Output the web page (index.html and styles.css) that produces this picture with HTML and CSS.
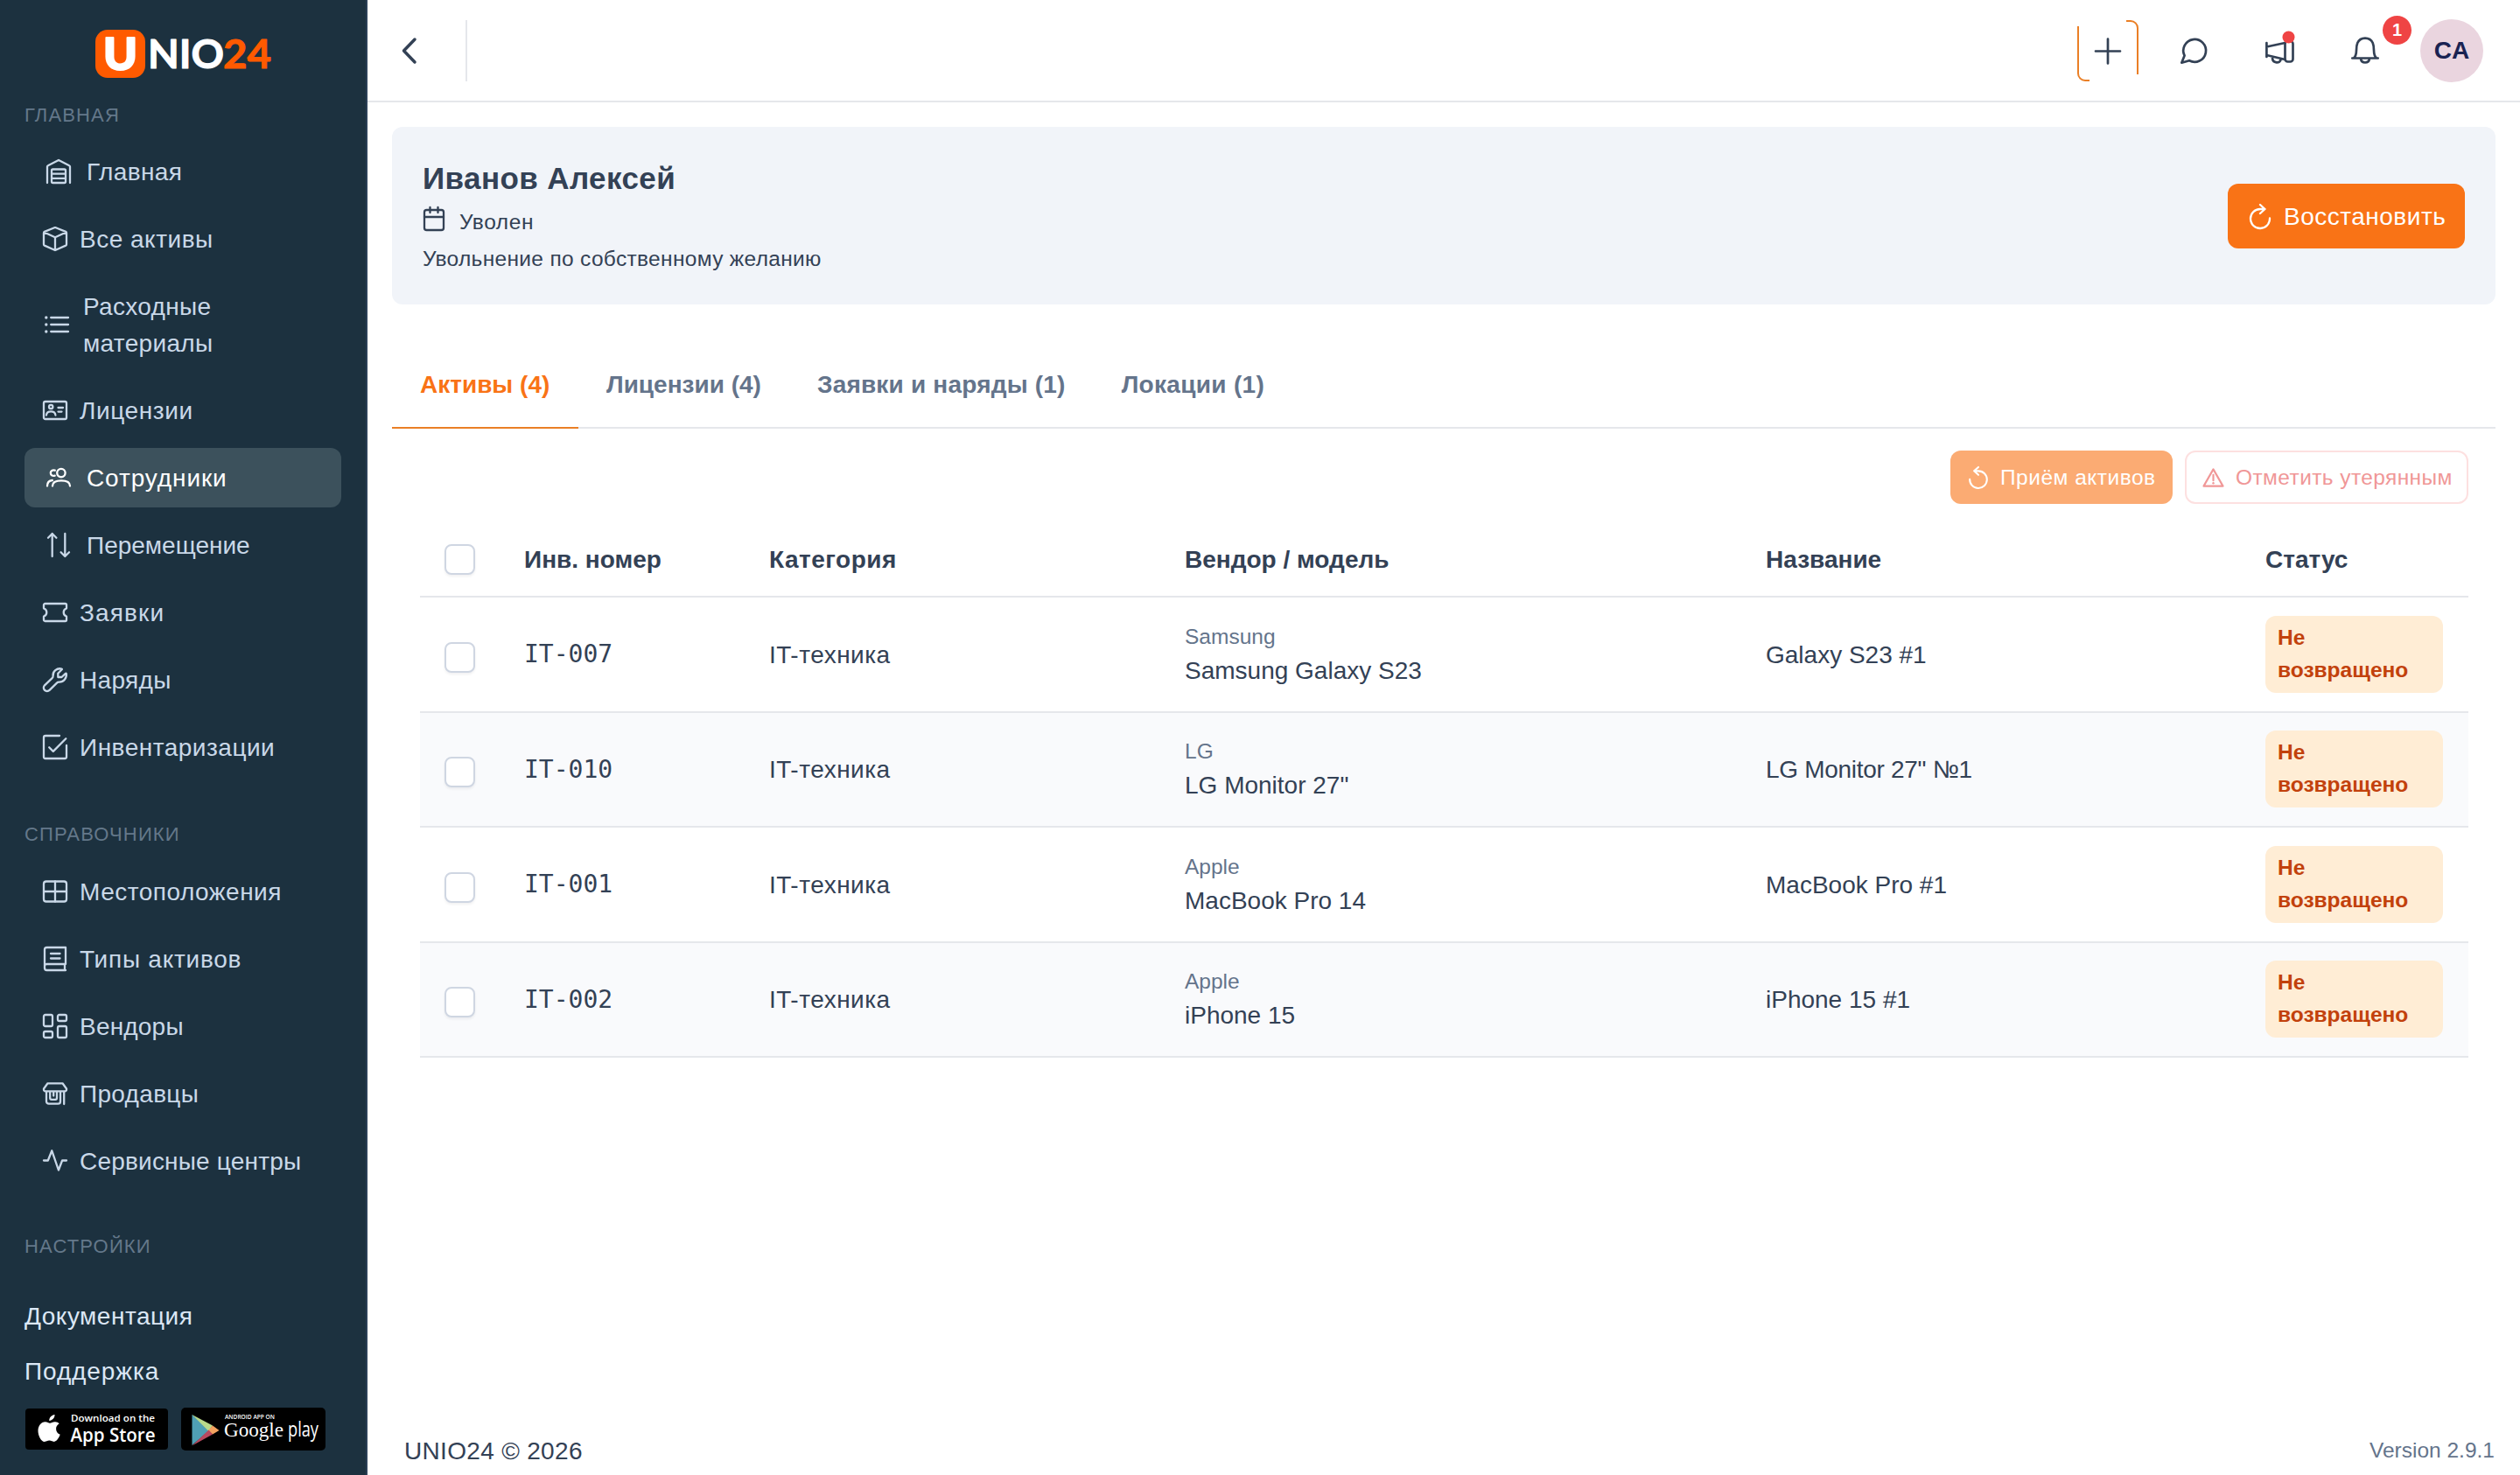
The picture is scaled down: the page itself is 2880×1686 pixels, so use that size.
FILE: index.html
```html
<!DOCTYPE html>
<html lang="ru">
<head>
<meta charset="utf-8">
<title>UNIO24</title>
<link rel="stylesheet" href="styles.css">
</head>
<body>
<svg class="sprite" aria-hidden="true">
  <symbol id="i-home" viewBox="0 0 28 28"><path d="M1 27V8.6a1.5 1.5 0 0 1 .9-1.4L14 1l12.1 6.2a1.5 1.5 0 0 1 .9 1.4V27M6 25.500v-12.500a1.500 1.500 0 0 1 1.500-1.500h13a1.500 1.500 0 0 1 1.500 1.500v12.500a1.500 1.500 0 0 1-1.500 1.500h-13a1.500 1.500 0 0 1-1.500-1.500M6 16.600h16M6 21.800h16"/></symbol>
  <symbol id="i-box" viewBox="0 0 28 28"><path d="M13.200 1.200 1.800 5.900Q1 6.300 1 7.200v13.100q0 .9.800 1.300L13.300 26.800q.7.300 1.400 0L26.200 21.600q.8-.4.800-1.300V7.200q0-.9-.8-1.300L14.800 1.200q-.8-.3-1.600 0zM1.500 6.500 14 12.200 26.500 6.500M14 12.200V27"/></symbol>
  <symbol id="i-list" viewBox="0 0 28 28"><path d="M7.200 6H27M7.200 14H27M7.200 22H27"/><circle class="fill" cx="1.800" cy="6" r="1.700"/><circle class="fill" cx="1.800" cy="14" r="1.700"/><circle class="fill" cx="1.800" cy="22" r="1.700"/></symbol>
  <symbol id="i-card" viewBox="0 0 28 28"><rect x="1" y="4" width="26" height="20" rx="1.800"/><circle cx="9.200" cy="10" r="2.200"/><path d="M4 19.500c.2-3 2.400-4.200 5.200-4.200s5 1.200 5.200 4.200M17.500 11H23M17.500 15.600h4"/></symbol>
  <symbol id="i-users" viewBox="0 0 28 28"><circle cx="16.900" cy="8.600" r="4.700"/><path d="M7 23.500c0-4.400 4.400-6.200 10-6.200s10 1.800 10 6.200M9.800 5.700C7 4.800 4.800 6.300 4.800 8.600s2.200 4 4.900 3M1 23.500c0-3.900 2-6.100 5.800-6.500"/></symbol>
  <symbol id="i-sort" viewBox="0 0 28 28"><path d="M6.700 27V1M2 5.700 6.700 1l4.700 4.700M21.300 1v26M16.600 22.300l4.700 4.700 4.700-4.700"/></symbol>
  <symbol id="i-ticket" viewBox="0 0 28 28"><path d="M2.500 4h23A1.500 1.500 0 0 1 27 5.500v3.800a5 5 0 0 0 0 9.400v3.800a1.500 1.500 0 0 1-1.500 1.500h-23A1.500 1.500 0 0 1 1 22.500v-3.800a5 5 0 0 0 0-9.400V5.500A1.500 1.500 0 0 1 2.500 4z"/></symbol>
  <symbol id="i-wrench" viewBox="0 0 28 28"><path d="M21.500 1.500C16 .2 11 4.300 11.600 9.600q.1 1.600-1 2.500L2 20.300a3.900 3.900 0 0 0 5.600 5.600l8.400-8.300q1-1 2.500-.9c5.300.3 9-4.700 8.300-9.700q-.2-.8-.9-.2L21.500 11h-4.200V6.700l4.400-4.400q.5-.6-.2-.8z"/></symbol>
  <symbol id="i-check" viewBox="0 0 28 28"><path d="M19 1H3a2 2 0 0 0-2 2v22a2 2 0 0 0 2 2h22a2 2 0 0 0 2-2V12M7.200 14.200l4.600 4.700L26.300 4.300"/></symbol>
  <symbol id="i-table" viewBox="0 0 28 28"><rect x="1" y="2.500" width="26" height="23" rx="2.800"/><path d="M14 2.500v23M1 14h26"/></symbol>
  <symbol id="i-book" viewBox="0 0 28 28"><path d="M26 20V1H4.500A2.500 2.500 0 0 0 2 3.500v21A2.500 2.500 0 0 0 4.500 27H26M25 20v7M26 20H4.500A2.300 2.300 0 0 0 2 22.200M9 8h10.500M9 13.500h10.500"/></symbol>
  <symbol id="i-objects" viewBox="0 0 28 28"><rect x="1" y="1" width="10" height="13" rx="1.800"/><rect x="17" y="1" width="10" height="7" rx="1.800"/><rect x="1" y="20" width="10" height="7" rx="1.800"/><rect x="17" y="14" width="10" height="13" rx="1.800"/></symbol>
  <symbol id="i-shop" viewBox="0 0 28 28"><path d="M5.500 2.300h17L27 8.500v1a1.800 1.800 0 0 1-1.800 1.800H2.800A1.800 1.800 0 0 1 1 9.500v-1zM4 11.300V23a2.700 2.700 0 0 0 2.700 2.700h10.600A2.700 2.700 0 0 0 20 23V11.300M24.200 11.300V26M8.200 11.300V19a1.800 1.800 0 0 0 1.800 1.800h4.300A1.800 1.800 0 0 0 16 19v-7.700M12.200 12v4.500"/></symbol>
  <symbol id="i-wave" viewBox="0 0 28 28"><path d="M1 13.500h4.800L10.300 2.300l7.600 22.200 4.200-11H27"/></symbol>
  <symbol id="i-refresh" viewBox="0 0 24 28"><path d="M17.500 6H12a11 11 0 1 0 11 10.500M12 1l5.500 5L12 11"/></symbol>
  <symbol id="i-undo" viewBox="0 0 24 28"><path d="M6.500 6H12A11 11 0 1 1 1 16.500M12 1 6.500 6l5.500 5"/></symbol>
  <symbol id="i-warn" viewBox="0 0 26 24"><path d="M13 1.500 25 22.500H1zM13 8.500v7"/><circle class="fill" cx="13" cy="18.800" r="1.300"/></symbol>
  <symbol id="i-calendar" viewBox="0 0 24 28"><rect x="1" y="4" width="22" height="23" rx="2.600"/><path d="M1 12h22M7.500 1v6M16.500 1v6"/></symbol>
</svg>

<div class="app">
  <aside class="sidebar">
    <div class="brand">
      <svg class="brand-logo" viewBox="0 -14 202 80">
        <rect x="0" y="0" width="57" height="55" rx="14" fill="#ff5a00"/>
        <text class="logo-u" x="9" y="45.500" textLength="39" lengthAdjust="spacingAndGlyphs">U</text>
        <text class="logo-t" x="60" y="44" textLength="87" lengthAdjust="spacingAndGlyphs">NIO</text>
        <text class="logo-t logo-n" x="146" y="44" textLength="55" lengthAdjust="spacingAndGlyphs">24</text>
      </svg>
    </div>
    <h2 class="label">ГЛАВНАЯ</h2>
    <nav class="nav">
      <a class="item wide"><svg class="ic"><use href="#i-home"/></svg><span class="ls4">Главная</span></a>
      <a class="item"><svg class="ic"><use href="#i-box"/></svg><span class="ls5">Все активы</span></a>
      <a class="item mid"><svg class="ic"><use href="#i-list"/></svg><span class="ls3">Расходные<br>материалы</span></a>
      <a class="item"><svg class="ic"><use href="#i-card"/></svg><span class="ls6">Лицензии</span></a>
      <a class="item wide active"><svg class="ic"><use href="#i-users"/></svg><span class="ls9">Сотрудники</span></a>
      <a class="item wide"><svg class="ic"><use href="#i-sort"/></svg><span>Перемещение</span></a>
      <a class="item"><svg class="ic"><use href="#i-ticket"/></svg><span class="ls11">Заявки</span></a>
      <a class="item"><svg class="ic"><use href="#i-wrench"/></svg><span class="ls3">Наряды</span></a>
      <a class="item"><svg class="ic"><use href="#i-check"/></svg><span class="ls5">Инвентаризации</span></a>
    </nav>
    <h2 class="label next">СПРАВОЧНИКИ</h2>
    <nav class="nav">
      <a class="item"><svg class="ic"><use href="#i-table"/></svg><span class="ls5">Местоположения</span></a>
      <a class="item"><svg class="ic"><use href="#i-book"/></svg><span class="ls7">Типы активов</span></a>
      <a class="item"><svg class="ic"><use href="#i-objects"/></svg><span class="ls2">Вендоры</span></a>
      <a class="item"><svg class="ic"><use href="#i-shop"/></svg><span class="ls3">Продавцы</span></a>
      <a class="item"><svg class="ic"><use href="#i-wave"/></svg><span class="ls2">Сервисные центры</span></a>
    </nav>
    <h2 class="label last">НАСТРОЙКИ</h2>
    <div class="links"><a class="ls5">Документация</a><a class="ls9">Поддержка</a></div>
    <div class="stores">
      <svg class="store-apple" viewBox="0 0 163 47">
        <rect width="163" height="47" rx="4" fill="#000"/>
        <path fill="#fff" d="M33.500 7c.4 3.400-3 7-6.200 6.900-.4-3.300 3-6.700 6.200-6.900zM38.700 17.300c-2.500 1.700-3.700 3.600-3.600 6.100.1 3 1.600 5.100 4.600 6.400-1.200 3.500-3.900 8-6.900 8.100-2.200 0-2.900-1.300-5.400-1.300s-3.300 1.300-5.400 1.300C18 38 14.500 30.700 14.500 25.400c0-5.600 3.500-10 8.200-10.100 2.300 0 4 1.500 5.300 1.500s3.400-1.700 6-1.600c1.900.1 3.600.8 4.700 2.100z"/>
        <text class="st-small" x="52" y="15" textLength="96" lengthAdjust="spacingAndGlyphs">Download on the</text>
        <text class="st-big" x="51.500" y="37.500" textLength="97" lengthAdjust="spacingAndGlyphs">App Store</text>
      </svg>
      <svg class="store-google" viewBox="0 0 165 49">
        <rect width="165" height="49" rx="5" fill="#000"/>
        <path fill="#4f9fb4" d="M12.500 8v35L33 25.500z"/>
        <path fill="#b9d98a" d="M12.500 8 36 20.500 31.500 27z"/>
        <path fill="#f4a25f" d="M36 20.500 43.500 26 36 30.500 31 26z"/>
        <path fill="#b8495f" d="M12.500 43.500 36 30.500 31.500 25.500z"/>
        <text class="st-tiny" x="50" y="12.500" textLength="57" lengthAdjust="spacingAndGlyphs">ANDROID APP ON</text>
        <text class="st-google" x="49" y="32.500" textLength="68" lengthAdjust="spacingAndGlyphs">Google</text>
        <text class="st-play" x="122" y="32.500" textLength="35" lengthAdjust="spacingAndGlyphs">play</text>
      </svg>
    </div>
  </aside>

  <div class="page">
    <header class="topbar">
      <svg class="back" viewBox="0 0 17 30"><path d="M15 2 2.500 15 15 28"/></svg>
      <i class="divider"></i>
      <div class="actions">
        <svg class="add" viewBox="0 0 70 70"><path class="frame" d="M1 7v54a8 8 0 0 0 8 8h5M56 1h5a8 8 0 0 1 8 8v53"/><path d="M35 21.500v28M21 35.500h28"/></svg>
        <svg class="chat" viewBox="0 0 30 30"><path d="M1.300 28.700 4.600 20.600A12.900 12.900 0 1 1 10 26.200z"/></svg>
        <svg class="horn" viewBox="0 0 33 38"><path d="M1.400 14v16M1.400 18.500 22.500 14M1.400 28 22.500 33M8 31c0 6.800 9.500 6.800 9.500 1.700"/><rect x="22.500" y="12" width="9" height="23.500" rx="3"/><circle cx="26.500" cy="7.500" r="7"/></svg>
        <span class="bell"><svg viewBox="0 0 32 31"><path d="M1.300 24.500h29.400M3 24.300c5-3.500 1.500-11 4.300-17.300 3.200-7.300 14.200-7.300 17.400 0 2.800 6.300-.7 13.800 4.300 17.300M11 25c.8 6 9.200 6 10 0"/></svg><b>1</b></span>
        <span class="avatar">CA</span>
      </div>
    </header>

    <main class="content">
      <section class="person">
        <div>
          <h1 class="ls4">Иванов Алексей</h1>
          <p class="fired"><svg class="cal"><use href="#i-calendar"/></svg><span class="ls6">Уволен</span></p>
          <p class="ls3">Увольнение по собственному желанию</p>
        </div>
        <button class="restore"><svg><use href="#i-refresh"/></svg><span class="ls5">Восстановить</span></button>
      </section>

      <div class="tabs">
        <a class="tab on">Активы (4)</a>
        <a class="tab">Лицензии (4)</a>
        <a class="tab ls2">Заявки и наряды (1)</a>
        <a class="tab ls3">Локации (1)</a>
      </div>

      <div class="tools">
        <button class="accept"><svg><use href="#i-undo"/></svg><span class="ls5">Приём активов</span></button>
        <button class="lost"><svg><use href="#i-warn"/></svg><span class="ls4">Отметить утерянным</span></button>
      </div>

      <div class="table">
        <div class="row head"><i class="cb"></i><span>Инв. номер</span><span class="ls5">Категория</span><span>Вендор / модель</span><span>Название</span><span>Статус</span></div>
        <div class="row"><i class="cb"></i><code>IT-007</code><span class="ls5">IT-техника</span><div class="model"><small>Samsung</small><span>Samsung Galaxy S23</span></div><span>Galaxy S23 #1</span><b class="status">Не<br>возвращено</b></div>
        <div class="row alt"><i class="cb"></i><code>IT-010</code><span class="ls5">IT-техника</span><div class="model"><small>LG</small><span>LG Monitor 27"</span></div><span class="tight">LG Monitor 27" №1</span><b class="status">Не<br>возвращено</b></div>
        <div class="row"><i class="cb"></i><code>IT-001</code><span class="ls5">IT-техника</span><div class="model"><small>Apple</small><span>MacBook Pro 14</span></div><span>MacBook Pro #1</span><b class="status">Не<br>возвращено</b></div>
        <div class="row alt"><i class="cb"></i><code>IT-002</code><span class="ls5">IT-техника</span><div class="model"><small>Apple</small><span>iPhone 15</span></div><span>iPhone 15 #1</span><b class="status">Не<br>возвращено</b></div>
      </div>
    </main>

    <footer class="footer"><span class="ls3">UNIO24 © 2026</span><small>Version 2.9.1</small></footer>
  </div>
</div>
</body>
</html>
```
FILE: styles.css
```css
* { box-sizing: border-box; }

body {
  margin: 0;
  font-family: "Liberation Sans", Arial, sans-serif;
  font-size: 28px;
  color: #334155;
  background: #fff;
}

h1, h2, p { margin: 0; font-weight: 400; }
button { font: inherit; border: 0; margin: 0; }
svg { fill: none; stroke: currentColor; stroke-width: 2.300; stroke-linecap: round; stroke-linejoin: round; flex: none; overflow: visible; }
symbol { overflow: visible; }
svg text { stroke: none; fill: #fff; }
svg .fill { fill: currentColor; stroke: none; }
.sprite { display: none; }

/* Tracking steps for Cyrillic labels */
.ls2 { letter-spacing: .2px; }
.ls3 { letter-spacing: .32px; }
.ls4 { letter-spacing: .4px; }
.ls5 { letter-spacing: .5px; }
.ls6 { letter-spacing: .6px; }
.ls7 { letter-spacing: .75px; }
.ls9 { letter-spacing: .9px; }
.ls11 { letter-spacing: 1.15px; }
.tight { letter-spacing: -.3px; }

.app { display: flex; width: 2880px; height: 1686px; overflow: hidden; }

/* Sidebar */
.sidebar {
  width: 420px;
  flex: none;
  padding-left: 28px;
  background: #1c313f;
  border-right: 2px solid #2b4057;
  color: #c9d8e8;
}
.brand { height: 120px; padding: 20px 0 0 81px; }
.brand-logo { display: block; width: 202px; height: 80px; stroke: none; }
.brand-logo text { stroke: #fff; stroke-width: 1; }
.logo-u { font: 900 51px Lato, sans-serif; }
.brand-logo .logo-u { stroke-width: 2; }
.logo-t { font: 700 45px Lato, sans-serif; }
.brand-logo .logo-n { fill: #ff5a00; stroke: #ff5a00; }

.label { height: 24px; margin-bottom: 18px; font-size: 22px; line-height: 24px; letter-spacing: 1.150px; color: #64788a; }
.label.next { margin: 54px 0 19px; }
.label.last { margin: 52px 0 36px; }

.nav { display: flex; flex-direction: column; gap: 9px; width: 362px; }
.item { display: flex; align-items: center; gap: 14px; min-height: 68px; padding: 12px 0 12px 21px; line-height: 42px; border-radius: 12px; }
.item span { padding-top: 2px; }
.item.mid { padding-left: 23px; gap: 16px; }
.item.wide { padding-left: 25px; gap: 18px; }
.item.active { background: #3c515c; color: #fff; }
.ic { width: 28px; height: 28px; }

.links { display: flex; flex-direction: column; color: #dbe7f5; }
.links a { line-height: 63px; }
.stores { display: flex; align-items: center; gap: 15px; margin: 10px 0 0 1px; }
.stores svg { stroke: none; }
.store-apple { width: 163px; height: 47px; }
.store-google { width: 165px; height: 49px; }
.st-small { font: 600 10.500px "Open Sans", sans-serif; }
.st-big { font: 600 22px "Open Sans", sans-serif; }
.st-tiny { font: 600 6.500px "Open Sans", sans-serif; }
.st-google { font: 24px "Liberation Serif", serif; }
.st-play { font: 400 23px "Open Sans", sans-serif; }

/* Page */
.page { flex: 1; display: flex; flex-direction: column; min-width: 0; }

.topbar { display: flex; align-items: center; height: 117px; padding: 0 42px 0 39px; border-bottom: 2px solid #e5e7eb; }
.back { width: 17px; height: 30px; stroke-width: 3.500; }
.divider { width: 2px; height: 70px; margin-left: 56px; background: #e5e7eb; }
.actions { display: flex; align-items: center; margin-left: auto; }
.actions svg { stroke-width: 2.700; }
.add { width: 70px; height: 70px; margin-right: 48px; }
.actions .frame { stroke: #ea7f26; stroke-width: 2; stroke-linecap: butt; }
.chat { width: 30px; height: 30px; margin-right: 67px; }
.horn { width: 33px; height: 38px; margin: -8px 65px 0 0; }
.horn circle { fill: #ef4444; stroke: none; }
.bell { position: relative; width: 32px; height: 31px; margin-right: 47px; }
.bell svg { display: block; width: 32px; height: 31px; }
.bell b { position: absolute; left: 36px; top: -24px; width: 33px; height: 33px; border-radius: 50%; background: #ef4444; color: #fff; font-size: 20px; line-height: 32px; text-align: center; }
.avatar { width: 72px; height: 72px; border-radius: 50%; background: #ead5df; color: #1a2352; font-weight: 700; line-height: 72px; text-align: center; }

.content { flex: 1; padding: 28px 28px 0; }
.person { display: flex; align-items: center; justify-content: space-between; height: 203px; padding: 2px 35px 0; border-radius: 12px; background: #f1f4f9; }
.person h1 { font-size: 35px; font-weight: 700; line-height: 44px; margin-bottom: 9px; }
.person p { font-size: 24.500px; line-height: 37px; }
.fired { display: flex; gap: 17px; margin-bottom: 5px; }
.cal { width: 24px; height: 28px; margin: 1px 0 0 1px; }
.restore { display: flex; align-items: center; gap: 15px; width: 271px; height: 74px; margin-top: -2px; padding: 0 0 0 25px; border-radius: 12px; background: #f97316; color: #fff; }
.restore svg { width: 24px; height: 28px; }
.restore span { padding-top: 2px; }

.tabs { display: flex; height: 100px; margin-top: 42px; border-bottom: 2px solid #e5e7eb; }
.tab { height: 100px; padding: 1px 32px 0; border-bottom: 2px solid transparent; font-weight: 700; line-height: 98px; color: #64748b; }
.tab.on { width: 213px; color: #f97316; border-color: #ea7f26; }

.tools { display: flex; justify-content: flex-end; gap: 14px; margin: 25px 31px 22px 0; font-size: 24.500px; }
.tools button { display: flex; align-items: center; gap: 13px; height: 61px; border-radius: 12px; padding: 0; }
.accept { width: 254px; background: #fbab73; color: #fff; }
.tools .accept { padding-left: 21px; gap: 14px; }
.accept svg { width: 22px; height: 25px; }
.lost { width: 324px; background: #fff; color: #f09797; }
.tools .lost { padding-left: 18px; border: 2px solid #fde0e0; }
.lost svg { width: 25px; height: 22px; }

.table { margin: 0 31px 0 32px; }
.row { display: grid; grid-template-columns: 91px 280px 475px 664px 571px 203px; align-items: center; height: 131.500px; padding-left: 28px; border-bottom: 2px solid #e5e7eb; }
.row.alt { background: #f9fafc; }
.head { height: 85px; font-weight: 700; }
.cb { width: 35px; height: 35px; border: 2px solid #cfd6e2; border-radius: 8px; background: #fff; box-shadow: 0 2px 3px rgba(15, 23, 42, .06); }
.row:not(.head) .cb { margin-top: 7px; }
.row:not(.head) > span { padding-top: 2px; }
code { font-family: "DejaVu Sans Mono", monospace; font-size: 28px; }
.model { display: flex; flex-direction: column; padding-top: 2px; line-height: 42px; }
.model small { font-size: 24.500px; line-height: 36px; color: #64748b; }
.status { height: 88px; padding: 6px 14px 8px; border-radius: 12px; background: #ffedd5; color: #c2410c; font-size: 24.500px; line-height: 37px; }

.footer { display: flex; justify-content: space-between; align-items: center; height: 54px; padding: 0 29px 0 42px; }
.footer small { padding-bottom: 2px; font-size: 24.500px; color: #64748b; }
```
